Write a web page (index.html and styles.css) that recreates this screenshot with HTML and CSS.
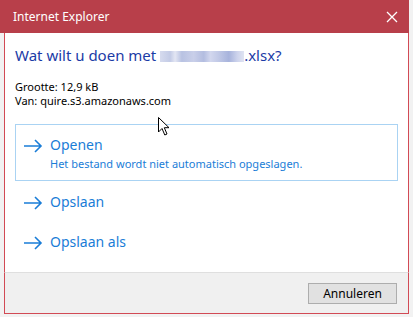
FILE: index.html
```html
<!DOCTYPE html>
<html lang="nl">
<head>
    <meta charset="UTF-8">
    <title>Internet Explorer</title>
    <link rel="stylesheet" href="styles.css">
</head>
<body>
    <div class="window">
        <div class="titlebar">
            <span class="title">Internet Explorer</span>
            <svg class="close" width="12" height="12" viewBox="0 0 12 12">
                <path d="M1 1 L11 11 M11 1 L1 11" stroke="#fff" stroke-width="1.3" fill="none"/>
            </svg>
        </div>
        <div class="content">
            <h1 class="question">Wat wilt u doen met <span class="blur"></span>.xlsx?</h1>
            <div class="info">
                <p>Grootte: 12,9 kB</p>
                <p>Van: quire.s3.amazonaws.com</p>
            </div>
            <div class="options">
                <div class="option selected">
                    <svg class="arrow" width="20" height="14" viewBox="0 0 20 14">
                        <path d="M1 7 H18 M12 1 L18 7 L12 13" stroke="#1a7dd7" stroke-width="1.6" fill="none"/>
                    </svg>
                    <div class="option-text">
                        <span class="option-title">Openen</span>
                        <span class="option-note">Het bestand wordt niet automatisch opgeslagen.</span>
                    </div>
                </div>
                <div class="option">
                    <svg class="arrow" width="20" height="14" viewBox="0 0 20 14">
                        <path d="M1 7 H18 M12 1 L18 7 L12 13" stroke="#1a7dd7" stroke-width="1.6" fill="none"/>
                    </svg>
                    <div class="option-text">
                        <span class="option-title">Opslaan</span>
                    </div>
                </div>
                <div class="option">
                    <svg class="arrow" width="20" height="14" viewBox="0 0 20 14">
                        <path d="M1 7 H18 M12 1 L18 7 L12 13" stroke="#1a7dd7" stroke-width="1.6" fill="none"/>
                    </svg>
                    <div class="option-text">
                        <span class="option-title">Opslaan als</span>
                    </div>
                </div>
            </div>
        </div>
        <div class="footer">
            <button class="cancel">Annuleren</button>
        </div>
        <svg class="cursor" width="14" height="20" viewBox="0 0 14 20">
            <path d="M0.5 0.5 V15 L4 11.5 L6.8 18 L9 17 L6.3 10.7 H11 Z" fill="#fff" stroke="#000" stroke-width="1"/>
        </svg>
    </div>
</body>
</html>
```

FILE: styles.css
```css
/* Dialog */
body {
    margin: 0;
    background-color: #f2f2f2;
    font-family: 'Noto Sans', 'Open Sans', sans-serif;
    color: #000;
}
.window {
    position: relative;
    width: 409px;
    height: 314px;
    display: flex;
    flex-direction: column;
}
.titlebar {
    height: 33px;
    background-color: #b83f4a;
    display: flex;
    align-items: center;
    justify-content: space-between;
    padding: 0 11px 0 13px;
    color: #fff;
    font-size: 12px;
}
.title {
    margin-top: -1px;
}
.content {
    flex: 1;
    margin-left: 4px;
    background: #fff;
    border-left: 1px solid #d24a55;
    border-right: 1px solid #d24a55;
    padding: 0 10px;
}
.question {
    margin: 12px 0 0;
    font-size: 15px;
    font-weight: normal;
    line-height: 20px;
    color: #1b3ba6;
}
.blur {
    display: inline-block;
    width: 84px;
    height: 11px;
    vertical-align: -1px;
    background: linear-gradient(90deg, #d6dbee 0, #c3cbe6 12%, #e3e6f3 18%, #b8c2e2 26%, #c9cfe9 40%, #b3bde0 52%, #d2d7ee 60%, #c0c8e6 70%, #a7b3dc 82%, #cdd3ec 92%, #e0e4f2 100%);
}
.info {
    margin-top: 15px;
    font-size: 11px;
    line-height: 14px;
}
.info p {
    margin: 0;
}
.options {
    margin-top: 16px;
    display: flex;
    flex-direction: column;
}
.option {
    display: flex;
    align-items: flex-start;
    padding: 10px 7px 8px;
    border: 1px solid transparent;
    color: #1a7dd7;
}
.option.selected {
    border-color: #aad3f3;
}
.arrow {
    margin-top: 4px;
    margin-right: 7px;
    flex-shrink: 0;
}
.option-text {
    display: flex;
    flex-direction: column;
}
.option-title {
    font-size: 14px;
    line-height: 20px;
}
.option-note {
    font-size: 11px;
    line-height: 17px;
}
.footer {
    height: 42px;
    box-sizing: border-box;
    margin-left: 4px;
    background-color: #f0f0f0;
    border-left: 1px solid #d24a55;
    border-right: 1px solid #d24a55;
    border-bottom: 1px solid #d24a55;
    border-top: 1px solid #dfdfdf;
    display: flex;
    justify-content: flex-end;
    align-items: flex-start;
    padding: 10px 11px 0 0;
}
.cancel {
    width: 89px;
    height: 21px;
    background: #e1e1e1;
    border: 1px solid #adadad;
    font-family: inherit;
    font-size: 12px;
    padding: 0;
    color: #000;
}
.cursor {
    position: absolute;
    left: 158px;
    top: 117px;
}
```
